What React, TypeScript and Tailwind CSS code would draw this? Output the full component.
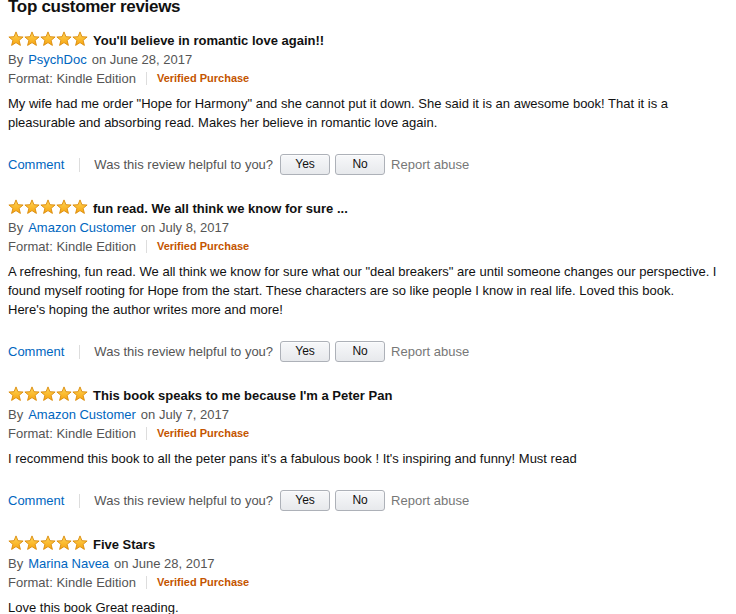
import React from "react";

type Review = {
  title: string;
  author: string;
  date: string;
  lines: string[];
};

const reviews: Review[] = [
  {
    title: "You'll believe in romantic love again!!",
    author: "PsychDoc",
    date: "June 28, 2017",
    lines: [
      'My wife had me order "Hope for Harmony" and she cannot put it down. She said it is an awesome book! That it is a',
      "pleasurable and absorbing read. Makes her believe in romantic love again.",
    ],
  },
  {
    title: "fun read. We all think we know for sure ...",
    author: "Amazon Customer",
    date: "July 8, 2017",
    lines: [
      'A refreshing, fun read. We all think we know for sure what our "deal breakers" are until someone changes our perspective. I',
      "found myself rooting for Hope from the start. These characters are so like people I know in real life. Loved this book.",
      "Here's hoping the author writes more and more!",
    ],
  },
  {
    title: "This book speaks to me because I'm a Peter Pan",
    author: "Amazon Customer",
    date: "July 7, 2017",
    lines: ["I recommend this book to all the peter pans it's a fabulous book ! It's inspiring and funny! Must read"],
  },
  {
    title: "Five Stars",
    author: "Marina Navea",
    date: "June 28, 2017",
    lines: ["Love this book Great reading."],
  },
];

const Star: React.FC<{ id: string }> = ({ id }) => (
  <svg width="16" height="16" viewBox="0 0 16 16" className="block">
    <defs>
      <linearGradient id={id} x1="0" y1="0" x2="0" y2="1">
        <stop offset="0" stopColor="#ffd75a" />
        <stop offset="1" stopColor="#f7a30c" />
      </linearGradient>
    </defs>
    <path
      d="M8 0.9 L9.94 5.7 L15.1 6 L11.1 9.35 L12.4 14.4 L8 11.6 L3.6 14.4 L4.9 9.35 L0.9 6 L6.06 5.7 Z"
      fill={`url(#${id})`}
      stroke="#d98a0a"
      strokeWidth="0.9"
      strokeLinejoin="round"
    />
  </svg>
);

const Stars: React.FC<{ idx: number }> = ({ idx }) => (
  <div className="flex -mt-[3px]">
    {[0, 1, 2, 3, 4].map((i) => (
      <Star key={i} id={`star-${idx}-${i}`} />
    ))}
  </div>
);

const VoteButton: React.FC<{ label: string }> = ({ label }) => (
  <button className="w-[50px] h-[21px] rounded-[3px] border border-[#adb1b8] bg-gradient-to-b from-[#f7f8fa] to-[#e7e9ec] text-[12px] leading-[19px] text-[#111] shadow-[0_1px_0_rgba(255,255,255,0.6)_inset]">
    {label}
  </button>
);

const App: React.FC = () => {
  return (
    <div className="min-h-screen bg-white px-2 font-['Liberation_Sans',Arial,sans-serif] text-[13px] text-[#111]">
      <h2 className="text-[17px] leading-[14px] font-bold tracking-[-0.3px] text-[#111]">Top customer reviews</h2>

      <div className="mt-[17px]">
        {reviews.map((r, idx) => (
          <div key={idx} className="mb-[24px]">
            <div className="flex h-[19px] items-center gap-[5px]">
              <Stars idx={idx} />
              <span className="font-bold leading-[19px]">{r.title}</span>
            </div>
            <div className="flex leading-[19px] text-[#555]">
              <span>By</span>
              <a className="ml-[5px] text-[#0066c0]">{r.author}</a>
              <span className="ml-[5px]">on {r.date}</span>
            </div>
            <div className="flex items-center leading-[19px] text-[#555]">
              <span>Format: Kindle Edition</span>
              <span className="mx-[10px] h-[13px] w-px bg-[#ddd]" />
              <span className="text-[11px] font-bold text-[#c45500]">Verified Purchase</span>
            </div>
            <div className="mt-[6px] leading-[19px]">
              {r.lines.map((l, i) => (
                <div key={i} className="whitespace-nowrap">
                  {l}
                </div>
              ))}
            </div>
            <div className="mt-[22px] flex h-[21px] items-center">
              <a className="text-[#0066c0]">Comment</a>
              <span className="ml-[15px] mr-[14px] h-[14px] w-px bg-[#ddd]" />
              <span className="text-[#555]">Was this review helpful to you?</span>
              <div className="ml-[7px] flex gap-[5px]">
                <VoteButton label="Yes" />
                <VoteButton label="No" />
              </div>
              <span className="ml-[6px] text-[#777]">Report abuse</span>
            </div>
          </div>
        ))}
      </div>
    </div>
  );
};

export default App;
